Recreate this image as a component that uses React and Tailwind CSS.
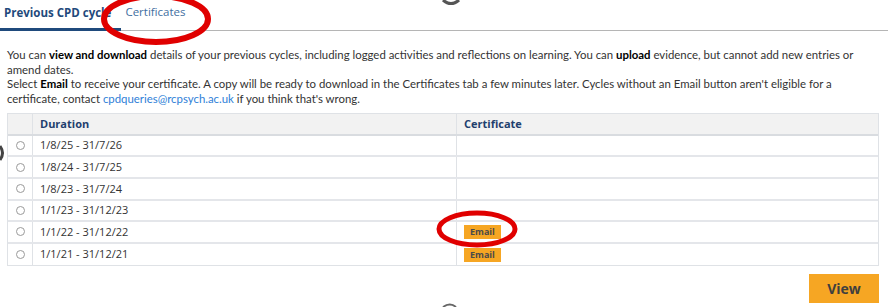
import React from "react";

const rows = [
  { d: "1/8/25 - 31/7/26", email: false },
  { d: "1/8/24 - 31/7/25", email: false },
  { d: "1/8/23 - 31/7/24", email: false },
  { d: "1/1/23 - 31/12/23", email: false },
  { d: "1/1/22 - 31/12/22", email: true },
  { d: "1/1/21 - 31/12/21", email: true },
];

export default function App() {
  return (
    <div
      className="relative w-[888px] h-[307px] overflow-hidden bg-white text-[#333]"
      style={{ fontFamily: "'Open Sans', 'Noto Sans', sans-serif" }}
    >
      {/* Tabs */}
      <div className="flex items-end h-[31px] border-b border-[#b5b5b5]">
        <div className="h-full flex items-center pl-[4px] pr-[10px] pb-[3px] border-b-[3px] border-[#1f4a7c] -mb-px text-[11.5px] font-bold text-[#1f4a7c]">
          Previous CPD cycle
        </div>
        <div className="h-full flex items-center px-[4px] pb-[6px] text-[11.5px] text-[#3f6f9f]">
          Certificates
        </div>
      </div>

      {/* Text */}
      <div
        className="px-[7px] pt-[17px] text-[11.4px] leading-[14.7px] text-[#333] whitespace-nowrap"
        style={{ fontFamily: "Lato, 'Open Sans', sans-serif" }}
      >
        <p>
          You can <b className="text-black">view and download</b> details of your previous cycles, including logged activities and reflections on learning. You can <b className="text-black">upload</b> evidence, but cannot add new entries or
          <br />
          amend dates.
        </p>
        <p>
          Select <b className="text-black">Email</b> to receive your certificate. A copy will be ready to download in the Certificates tab a few minutes later. Cycles without an Email button aren't eligible for a
          <br />
          certificate, contact <span className="text-[#2f7fd8]">cpdqueries@rcpsych.ac.uk</span> if you think that's wrong.
        </p>
      </div>

      {/* Table */}
      <div className="mx-[7px] mt-[6px] w-[872px] border border-[#dfe2e6]">
        <div className="flex h-[22px] bg-[#f2f2f2] border-b-[2px] border-[#d9dce0] text-[11px] font-bold text-[#1f3f6e]">
          <div className="w-[25px] border-r border-[#dfe2e6]" />
          <div className="w-[424px] border-r border-[#dfe2e6] flex items-center pl-[7px]">Duration</div>
          <div className="flex-1 flex items-center pl-[7px]">Certificate</div>
        </div>
        {rows.map((r, i) => (
          <div
            key={i}
            className={`flex h-[21.6px] text-[11px] ${i < rows.length - 1 ? "border-b-[2px] border-[#e4e6ea]" : ""}`}
          >
            <div className="w-[25px] border-r border-[#dfe2e6] flex items-center justify-center">
              <span className="w-[9px] h-[9px] rounded-full border border-[#9a9a9a] bg-white" />
            </div>
            <div className="w-[424px] border-r border-[#dfe2e6] flex items-center pl-[7px]">{r.d}</div>
            <div className="flex-1 flex items-center pl-[7px]">
              {r.email && (
                <span className="bg-[#f6a623] text-[#4a4a4a] text-[9px] font-bold px-[6px] h-[14px] flex items-center">
                  Email
                </span>
              )}
            </div>
          </div>
        ))}
      </div>

      {/* View button */}
      <div className="flex justify-end pr-[9px] mt-[8px]">
        <button className="w-[70px] h-[29px] bg-[#f6a623] text-[#3f3f3f] text-[14px] font-bold">View</button>
      </div>

      {/* Annotations */}
      <svg className="absolute inset-0 pointer-events-none" width="888" height="307">
        <ellipse cx="156" cy="19" rx="52" ry="23" fill="none" stroke="#e00000" strokeWidth="6" />
        <ellipse cx="477" cy="229" rx="38" ry="16" fill="none" stroke="#e00000" strokeWidth="5" />
        <path d="M443 0 Q451 7 459 0" fill="none" stroke="#555" strokeWidth="3" />
        <path d="M0 146 Q5 153 0 160" fill="none" stroke="#444" strokeWidth="3" />
        <path d="M443 307 Q450 302 456 307" fill="none" stroke="#666" strokeWidth="2" />
      </svg>
    </div>
  );
}
